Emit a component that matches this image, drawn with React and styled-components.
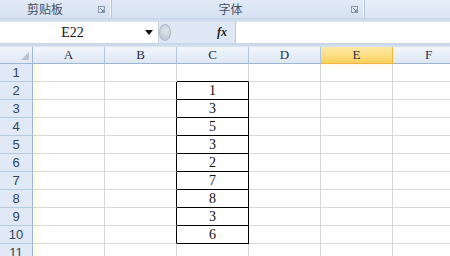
import React from 'react';
import styled, { createGlobalStyle } from 'styled-components';

const GlobalStyle = createGlobalStyle`
  html, body { margin: 0; padding: 0; background: #fff; }
  body { width: 450px; height: 256px; overflow: hidden; }
`;

const Page = styled.div`
  width: 450px;
  height: 256px;
  overflow: hidden;
  display: flex;
  flex-direction: column;
  background: #fff;
`;

const Ribbon = styled.div`
  height: 18px;
  display: flex;
  background: linear-gradient(#e2ebf6, #d6e2f1);
  flex-shrink: 0;
`;

const Group = styled.div`
  width: ${p => p.w}px;
  flex-shrink: 0;
  display: flex;
  align-items: center;
  border-right: 1px solid #b4c6dd;
  box-shadow: inset -1px 0 0 #f3f7fc;
`;

const GroupLabel = styled.span`
  flex: 1;
  text-align: center;
  font-family: "Noto Sans CJK SC", sans-serif;
  font-size: 12px;
  color: #3f4e63;
  padding-right: ${p => p.shift || 0}px;
  line-height: 18px;
`;

const Launcher = styled.svg`
  width: 7px;
  height: 7px;
  margin-right: 6px;
  flex-shrink: 0;
`;

const RibbonRest = styled.div`
  flex: 1;
  background: linear-gradient(#e6eef8, #dbe6f3);
`;

const Band = styled.div`
  height: ${p => p.h}px;
  flex-shrink: 0;
  background: linear-gradient(#c5d4e8, #dae4f1);
`;

const FormulaBar = styled.div`
  height: 21px;
  flex-shrink: 0;
  display: flex;
  background: #dfe8f4;
`;

const NameBox = styled.div`
  width: 158px;
  display: flex;
  align-items: center;
  background: #fff;
  border-right: 1px solid #c2cfe0;
`;

const NameText = styled.span`
  flex: 1;
  text-align: center;
  font-family: "Liberation Serif", serif;
  font-size: 14px;
  color: #111;
`;

const Arrow = styled.span`
  width: 0;
  height: 0;
  border-left: 4px solid transparent;
  border-right: 4px solid transparent;
  border-top: 5px solid #111;
  margin-right: 5px;
`;

const Grip = styled.div`
  width: 12px;
  display: flex;
  align-items: center;
  justify-content: center;
`;

const GripDot = styled.div`
  width: 11px;
  height: 15px;
  border-radius: 50%;
  background: radial-gradient(circle at 60% 40%, #dfe4ea, #b9c3cf);
  border: 1px solid #aab7c8;
`;

const FxArea = styled.div`
  width: 65px;
  display: flex;
  align-items: center;
  justify-content: flex-end;
  padding-right: 8px;
  box-sizing: border-box;
  border-right: 1px solid #b7c6da;
`;

const Fx = styled.span`
  font-family: "Liberation Serif", serif;
  font-style: italic;
  font-weight: bold;
  font-size: 12px;
  color: #222;
`;

const FormulaInput = styled.div`
  flex: 1;
  background: #fff;
`;

const Sheet = styled.div`
  display: grid;
  grid-template-columns: 33px repeat(6, 72px);
  grid-template-rows: 17px repeat(11, 18px);
  flex-shrink: 0;
`;

const Corner = styled.div`
  background: linear-gradient(#f0f4fa, #e1e9f4);
  border-right: 1px solid #9eb6ce;
  border-bottom: 1px solid #9eb6ce;
  box-sizing: border-box;
  position: relative;
  &::after {
    content: "";
    position: absolute;
    right: 3px;
    bottom: 3px;
    border-left: 8px solid transparent;
    border-bottom: 8px solid #b9c4d2;
  }
`;

const ColHead = styled.div`
  box-sizing: border-box;
  display: flex;
  align-items: center;
  justify-content: center;
  font-family: "Liberation Serif", serif;
  font-size: 13px;
  color: #1e2f4a;
  background: ${p => p.active
    ? 'linear-gradient(#fde9a8, #fbd25e)'
    : 'linear-gradient(#f2f6fb, #dde7f3)'};
  border-right: 1px solid ${p => p.active ? '#e8b94c' : '#b3c5da'};
  border-bottom: 1px solid ${p => p.active ? '#f2b43c' : '#9eb6ce'};
`;

const RowHead = styled.div`
  box-sizing: border-box;
  display: flex;
  align-items: center;
  justify-content: center;
  font-family: "Liberation Sans", sans-serif;
  font-size: 13px;
  color: #2f4560;
  background: #e0e9f5;
  border-right: 1px solid #9eb6ce;
  border-bottom: 1px solid #b8cade;
`;

const Cell = styled.div`
  box-sizing: border-box;
  display: flex;
  align-items: center;
  justify-content: center;
  font-family: "Liberation Serif", serif;
  font-size: 14px;
  color: #111;
  border-right: 1px solid ${p => p.boxRight ? '#000' : '#d8d8d8'};
  border-bottom: 1px solid ${p => p.boxBottom ? '#000' : '#d8d8d8'};
  background: ${p => p.first
    ? 'linear-gradient(90deg, #fff7de 0px, #ffffff 8px)'
    : p.active ? 'linear-gradient(#fffbec, #ffffff 6px)' : '#fff'};
`;

const columns = ['A', 'B', 'C', 'D', 'E', 'F'];
const values = [null, 1, 3, 5, 3, 2, 7, 8, 3, 6, null];

const LauncherIcon = () => (
  <Launcher viewBox="0 0 7 7">
    <rect x="0.5" y="0.5" width="6" height="6" fill="none" stroke="#8d9bae" strokeWidth="1" />
    <path d="M2 2 L5.5 5.5 M3.5 5.5 H5.5 V3.5" stroke="#7a889c" strokeWidth="1" fill="none" />
  </Launcher>
);

export default function App() {
  return (
    <Page>
      <GlobalStyle />
      <Ribbon>
        <Group w={111}>
          <GroupLabel shift={8}>剪贴板</GroupLabel>
          <LauncherIcon />
        </Group>
        <Group w={252}>
          <GroupLabel shift={2}>字体</GroupLabel>
          <LauncherIcon />
        </Group>
        <RibbonRest />
      </Ribbon>
      <Band h={4} />
      <FormulaBar>
        <NameBox>
          <NameText>E22</NameText>
          <Arrow />
        </NameBox>
        <Grip><GripDot /></Grip>
        <FxArea><Fx>fx</Fx></FxArea>
        <FormulaInput />
      </FormulaBar>
      <Band h={4} />
      <Sheet>
        <Corner />
        {columns.map(c => (
          <ColHead key={c} active={c === 'E'}>{c}</ColHead>
        ))}
        {values.map((v, i) => {
          const row = i + 1;
          const inBox = row >= 2 && row <= 10;
          return (
            <React.Fragment key={row}>
              <RowHead>{row}</RowHead>
              {columns.map((c, ci) => (
                <Cell
                  key={c}
                  first={ci === 0}
                  active={c === 'E' && row === 1}
                  boxRight={inBox && (c === 'B' || c === 'C')}
                  boxBottom={c === 'C' && row >= 1 && row <= 10}
                >
                  {c === 'C' && v !== null ? v : ''}
                </Cell>
              ))}
            </React.Fragment>
          );
        })}
      </Sheet>
    </Page>
  );
}
